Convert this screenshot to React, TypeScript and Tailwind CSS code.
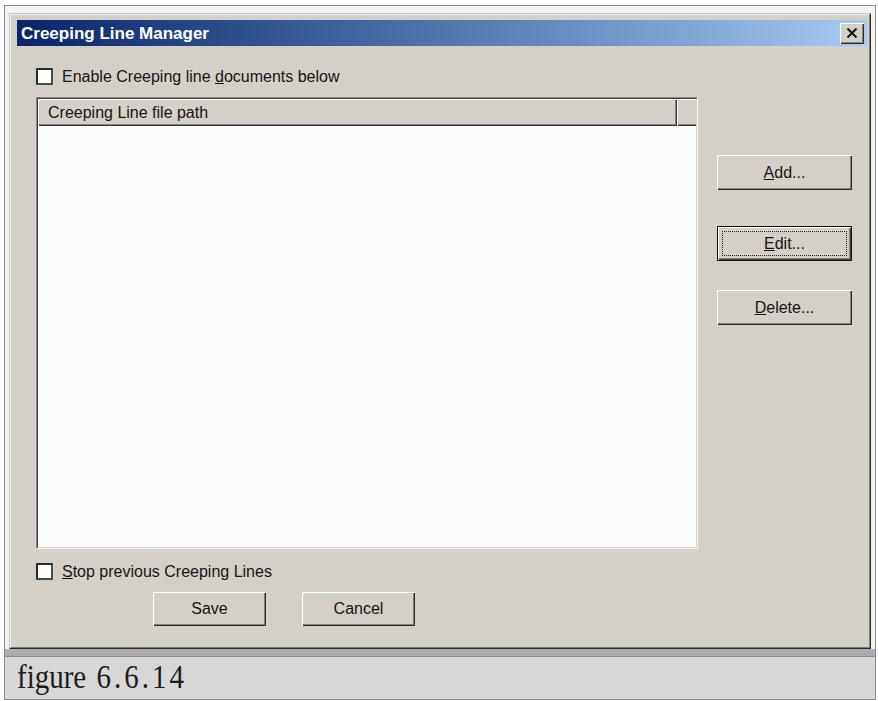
import React from "react";

function Check() {
  return (
    <div className="w-[17px] h-[17px] shrink-0 bg-white border-2 border-t-[#2a2a2a] border-l-[#2a2a2a] border-r-[#4a4a4a] border-b-[#4a4a4a]" />
  );
}

function Btn({
  children,
  className = "",
  def = false,
}: {
  children: React.ReactNode;
  className?: string;
  def?: boolean;
}) {
  return (
    <div
      className={`relative flex items-center justify-center bg-[#d4d0c8] text-[16px] text-[#151515] ${
        def
          ? "border border-[#111] shadow-[inset_1px_1px_0_#ffffff,inset_-1px_-1px_0_#404040,inset_-2px_-2px_0_#808080]"
          : "shadow-[inset_1px_1px_0_#ffffff,inset_-1px_-1px_0_#2a2a2a,inset_-2px_-2px_0_#808080]"
      } ${className}`}
    >
      {def && (
        <div className="absolute left-[4px] top-[4px] right-[4px] bottom-[4px] border border-dotted border-[#222]" />
      )}
      <span className="relative">{children}</span>
    </div>
  );
}

export default function App() {
  return (
    <div className="w-[878px] h-[701px] bg-white pl-[4px] pt-[5px] font-['Liberation_Sans',Arial,sans-serif]">
      <div className="w-[872px] h-[695px] border border-[#8c8c8c] bg-[#f3f3f3] flex flex-col">
        <div className="pl-[4px] pt-[7px]">
          {/* Dialog */}
          <div className="w-[862px] h-[636px] bg-[#d4d0c8] border border-t-[#c2c2c2] border-l-[#c2c2c2] border-r-[#2c2c2c] border-b-[#2c2c2c]">
            <div className="w-full h-full border border-t-[#f2f2f2] border-l-[#f2f2f2] border-r-[#808080] border-b-[#808080] flex flex-col">
              {/* Title bar */}
              <div className="ml-[6px] mr-[2px] mt-[5px] h-[26px] flex items-center justify-between bg-gradient-to-r from-[#0a246a] to-[#a6caf0]">
                <span className="pl-[4px] text-[17px] font-bold text-white leading-none">
                  Creeping Line Manager
                </span>
                <div className="mr-[3px] w-[24px] h-[21px] flex items-center justify-center bg-[#d4d0c8] shadow-[inset_1px_1px_0_#ffffff,inset_-1px_-1px_0_#303030,inset_-2px_-2px_0_#808080]">
                  <svg width="12" height="10" viewBox="0 0 12 10">
                    <path d="M1.5 0.5 L10.5 9.5 M10.5 0.5 L1.5 9.5" stroke="#111" strokeWidth="2" />
                  </svg>
                </div>
              </div>

              {/* Body */}
              <div className="pl-[25px] pt-[22px] flex flex-col">
                <div className="flex items-center h-[17px]">
                  <Check />
                  <span className="ml-[9px] text-[16px] text-[#151515] leading-none">
                    Enable Creeping line <span className="underline">d</span>ocuments below
                  </span>
                </div>

                <div className="mt-[12px] flex">
                  {/* List box */}
                  <div className="w-[662px] h-[452px] border border-t-[#8a8a8a] border-l-[#8a8a8a] border-r-[#f4f4f4] border-b-[#f4f4f4]">
                    <div className="w-full h-full border border-t-[#383838] border-l-[#383838] border-r-[#d4d0c8] border-b-[#d4d0c8] flex flex-col bg-[#fafbfb]">
                      <div className="h-[27px] flex shrink-0">
                        <div className="w-[639px] h-full flex items-center bg-[#d4d0c8] shadow-[inset_1px_1px_0_#ffffff,inset_-1px_-1px_0_#383838,inset_-2px_-2px_0_#808080]">
                          <span className="pl-[10px] text-[16px] text-[#151515] leading-none">
                            Creeping Line file path
                          </span>
                        </div>
                        <div className="flex-1 h-full bg-[#d4d0c8] shadow-[inset_1px_1px_0_#ffffff,inset_0_-1px_0_#383838,inset_0_-2px_0_#808080]" />
                      </div>
                      <div className="flex-1 bg-[#fafbfb]" />
                    </div>
                  </div>

                  {/* Right buttons */}
                  <div className="ml-[19px] pt-[58px] flex flex-col">
                    <Btn className="w-[135px] h-[35px]">
                      <span className="underline">A</span>dd...
                    </Btn>
                    <Btn def className="w-[135px] h-[35px] mt-[36px]">
                      <span className="underline">E</span>dit...
                    </Btn>
                    <Btn className="w-[135px] h-[35px] mt-[29px]">
                      <span className="underline">D</span>elete...
                    </Btn>
                  </div>
                </div>

                <div className="mt-[14px] flex items-center h-[17px]">
                  <Check />
                  <span className="ml-[9px] text-[16px] text-[#151515] leading-none">
                    <span className="underline">S</span>top previous Creeping Lines
                  </span>
                </div>

                <div className="mt-[12px] ml-[117px] flex">
                  <Btn className="w-[113px] h-[34px]">Save</Btn>
                  <Btn className="w-[113px] h-[34px] ml-[36px]">Cancel</Btn>
                </div>
              </div>
            </div>
          </div>
        </div>

        {/* Band */}
        <div className="h-[8px] bg-[#adadad] border-b border-[#8f8f8f]" />

        {/* Caption */}
        <div className="flex-1 bg-[#d7d7d7] pl-[12px] pt-[7px]">
          <span className="inline-block origin-[0_80%] scale-y-[1.18] font-['Liberation_Serif','Times_New_Roman',serif] text-[29px] leading-[29px] text-[#1c1c1c]">
            figure<span className="tracking-[3px]"> 6.6.14</span>
          </span>
        </div>
      </div>
    </div>
  );
}
